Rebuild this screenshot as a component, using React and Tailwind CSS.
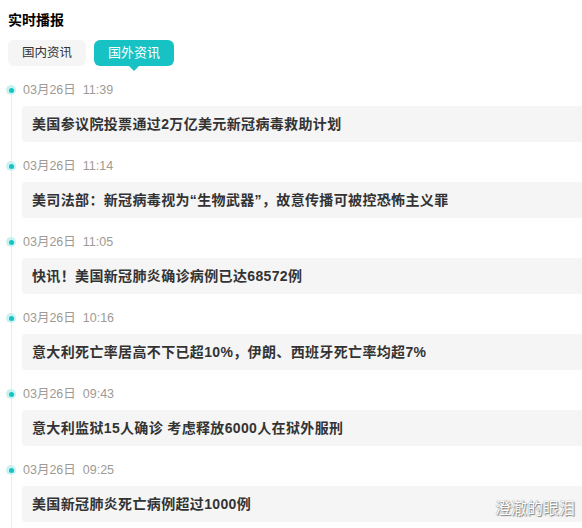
import React from 'react';

const news = [
  { time: '03月26日  11:39', title: '美国参议院投票通过2万亿美元新冠病毒救助计划' },
  { time: '03月26日  11:14', title: '美司法部：新冠病毒视为“生物武器”，故意传播可被控恐怖主义罪' },
  { time: '03月26日  11:05', title: '快讯！美国新冠肺炎确诊病例已达68572例' },
  { time: '03月26日  10:16', title: '意大利死亡率居高不下已超10%，伊朗、西班牙死亡率均超7%' },
  { time: '03月26日  09:43', title: '意大利监狱15人确诊 考虑释放6000人在狱外服刑' },
  { time: '03月26日  09:25', title: '美国新冠肺炎死亡病例超过1000例' },
];

const App = () => {
  return (
    <div
      className="relative h-[528px] w-[582px] overflow-hidden bg-white pt-[12px]"
      style={{ fontFamily: '"Liberation Sans", "Noto Sans CJK SC", sans-serif' }}
    >
      {/* Title */}
      <div className="px-2 text-[14px] font-bold leading-[16px] text-black">实时播报</div>

      {/* Tabs */}
      <div className="mt-[12px] flex gap-2 px-2">
        <button className="h-[26px] rounded-md bg-[#f5f5f5] px-[14px] text-[12.5px] text-[#333]">
          国内资讯
        </button>
        <button className="relative h-[26px] rounded-md bg-[#17c2c4] px-[14px] text-[13px] text-white">
          国外资讯
          <span className="absolute left-1/2 top-full -ml-[5px] h-0 w-0 border-x-[5px] border-t-[5px] border-x-transparent border-t-[#17c2c4]" />
        </button>
      </div>

      {/* Timeline */}
      <div className="relative mt-[14px]">
        <div className="absolute bottom-0 left-[11px] top-[10px] w-px bg-[#ececec]" />
        {news.map((item) => (
          <div key={item.time} className="relative pb-[14px] pl-[22px]">
            <span className="absolute left-[6px] top-[5px] flex h-[10px] w-[10px] items-center justify-center rounded-full bg-[#c9f1f1]">
              <span className="h-[5px] w-[5px] rounded-full bg-[#17c2c4]" />
            </span>
            <div className="h-[20px] whitespace-pre pl-px text-[12.5px] leading-[20px] text-[#a09a94]">
              {item.time}
            </div>
            <div className="mt-[6px] flex h-[36px] items-center rounded-l bg-[#f5f5f5] pl-[10px] text-[14px] font-bold tracking-[0.35px] text-[#333]">
              {item.title}
            </div>
          </div>
        ))}
      </div>

      {/* Watermark */}
      <div
        className="absolute bottom-[7px] right-[7px] text-[16px] text-white"
        style={{ textShadow: '0 0 1px #666, 1px 1px 1px #888' }}
      >
        澄澈的眼泪
      </div>
    </div>
  );
};

export default App;
